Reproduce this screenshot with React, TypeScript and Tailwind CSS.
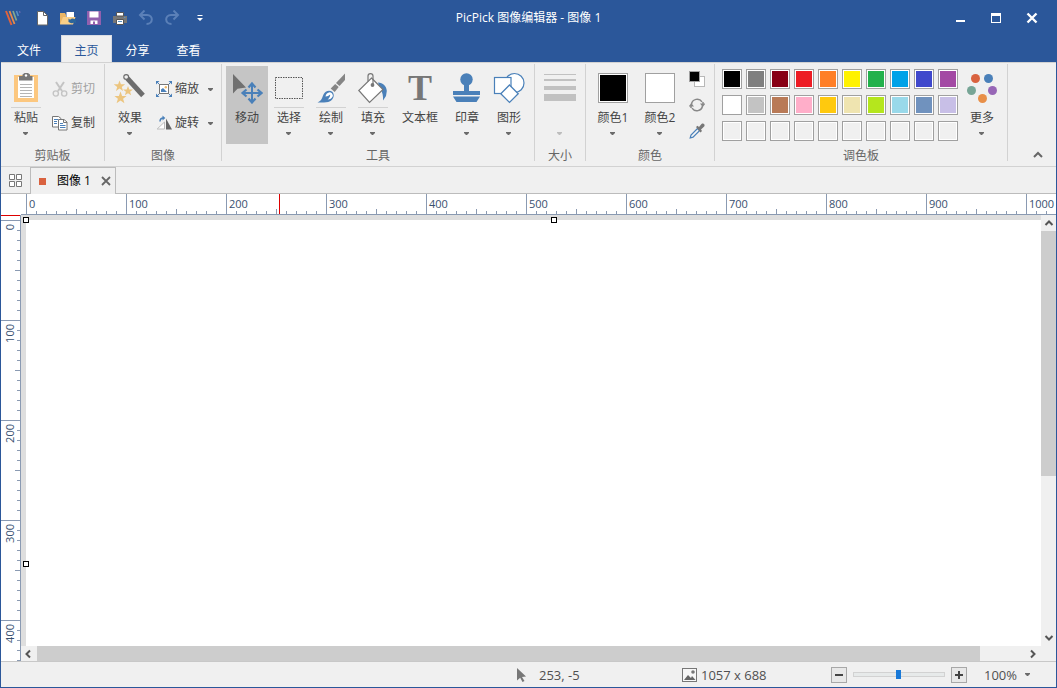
import type { ReactNode } from 'react';

const GRAY = '#777777';
const BLUE = '#4a80b9';

function Caret({ faded = false }: { faded?: boolean }) {
  return (
    <svg width="6" height="3" viewBox="0 0 6 3" className={faded ? 'text-[#bdbdbd]' : 'text-[#6b6b6b]'} aria-hidden="true">
      <path d="M0 0h5v1L3 3H2L0 1z" fill="currentColor" />
    </svg>
  );
}

function Icon({ size = 32, children }: { size?: number; children: ReactNode }) {
  return (
    <svg width={size} height={size} viewBox={`0 0 ${size} ${size}`} fill="none" className="shrink-0" aria-hidden="true">
      {children}
    </svg>
  );
}

/* ---------- Large ribbon icons ---------- */

const PasteIcon = () => (
  <Icon>
    <path d="M4 3h24v27H4z" fill="#fcc77f" />
    <path d="M8 5h16v21H8z" fill="#fff" />
    <path d="M9 4h3.500V2.500L14.500 1h3.500L20 2.500V4h2.500v4.500H9z" fill={GRAY} />
    <circle cx="16" cy="3.500" r="1.200" fill="#fff" />
    <path d="M10 12.500h12M10 15.500h12M10 18.500h12M10 21.500h12M10 24.500h12" stroke="#b5b5b5" />
  </Icon>
);

const EffectsIcon = () => (
  <Icon>
    <path d="M13.500 6.500l15.500 17" stroke="#6d6d6d" strokeWidth="5" />
    <circle cx="12.200" cy="5" r="2.400" fill="#f0f0f0" stroke="#6d6d6d" strokeWidth="1.200" />
    <g fill="#ecc57f">
      <path d="M5.500 8.500l1.400 3.700 4.200.1-3.300 2.600 1.200 4-3.500-2.300-3.500 2.300 1.200-4L-.1 12.300l4.200-.1z" />
      <path d="M14 14l1.300 3.400 3.600.1-2.800 2.200 1 3.500-3.100-2-3.100 2 1-3.500-2.800-2.200 3.600-.1z" />
      <path d="M6.500 19.500l1.600 4.400 4.500.1-3.500 2.800 1.300 4.400-3.900-2.600-3.900 2.600 1.300-4.400L.4 24l4.500-.1z" />
    </g>
  </Icon>
);

const MoveIcon = () => (
  <Icon>
    <path d="M2 2l13 13.500-8.500 1.200L2 21.500z" fill="#707070" />
    <path d="M21 13v16M13 21h16" stroke={BLUE} strokeWidth="2" />
    <path d="M17.500 15.500L21 11.500l3.500 4M17.500 26.500l3.500 4 3.500-4M15.500 17.500L11.500 21l4 3.500M26.500 17.500l4 3.500-4 3.500" stroke={BLUE} strokeWidth="2.200" />
  </Icon>
);

const SelectIcon = () => (
  <Icon>
    <rect x="2.500" y="5.500" width="27" height="21" stroke="#555" strokeDasharray="1.500 1" />
  </Icon>
);

const BrushIcon = () => (
  <Icon>
    <path d="M30 1.500V8l-5.500 6-3.500-3z" fill="#858585" />
    <path d="M20.200 12l3.500 3-4 5-4-3.500z" fill="#858585" />
    <path d="M2.500 30.500c4-1.500 4.500-4.500 6-8 1.500-3.500 6-5 9-2.500 2.500 3 1 7.500-2.500 9.300-3 1.500-8 1.400-12.500 1.200z" fill={BLUE} />
    <path d="M10.500 24.500c.4-2.400 2-4 4.400-4.200 1.800.4 3 1.800 3 3.700-1 2.300-3 3.600-5.300 3.600 1.700-1.400 2.600-3 2.600-5-1.600 1.300-3 2-4.700 1.900z" fill="#fff" />
  </Icon>
);

const FillIcon = () => (
  <Icon>
    <path d="M21 10.500c5 .3 8.500 3.500 8.800 8.500l-.8 5-3 4.500c.3-4.500-.3-8.500-3-12z" fill={BLUE} />
    <path d="M14.500 6L26 17.500 12.500 30.500 1.800 18.500z" fill="#fff" stroke={GRAY} strokeWidth="1.200" />
    <path d="M11 9.500V4c0-3.300 5-3.300 5 0v9" stroke={GRAY} strokeWidth="1.200" />
    <circle cx="15.500" cy="13" r="1.900" fill={GRAY} />
  </Icon>
);

const StampIcon = () => (
  <Icon>
    <circle cx="15.500" cy="7.500" r="6.200" fill={BLUE} />
    <path d="M13 12h5v7h-5zM2 19h27v4H2zM2 24.500h27L25.500 30h-20z" fill={BLUE} />
  </Icon>
);

const ShapesIcon = () => (
  <Icon>
    <circle cx="21.500" cy="11" r="9.500" fill="#fff" stroke={BLUE} strokeWidth="1.200" />
    <rect x="1.500" y="5.500" width="16.500" height="16" fill="#fff" stroke={BLUE} strokeWidth="1.200" />
    <path d="M16.500 13l8.700 8.700-8.700 8.700-8.700-8.700z" fill="#fff" stroke={BLUE} strokeWidth="1.300" />
  </Icon>
);

const LinesIcon = () => (
  <Icon>
    <path d="M0 2h32v1H0zM0 7h32v2H0zM0 14h32v4H0zM0 22h32v7H0z" fill="#c1c1c1" />
  </Icon>
);

const MoreIcon = () => (
  <Icon>
    <circle cx="9.500" cy="6.500" r="4.500" fill="#d9623f" />
    <circle cx="22.500" cy="6.500" r="4.500" fill="#4a80b9" />
    <circle cx="5.500" cy="18.500" r="4.500" fill="#77a596" />
    <circle cx="26.500" cy="18.500" r="4.500" fill="#9766b6" />
    <circle cx="16.500" cy="26.500" r="4.500" fill="#e88f48" />
  </Icon>
);

/* ---------- Small ribbon icons ---------- */

const CutIcon = () => (
  <Icon size={16}>
    <path d="M4 1l6 9M12 1L6 10" stroke="#c4c4c4" strokeWidth="2" />
    <circle cx="3.800" cy="12.500" r="2.600" stroke="#c4c4c4" strokeWidth="1.400" />
    <circle cx="12.200" cy="12.500" r="2.600" stroke="#c4c4c4" strokeWidth="1.400" />
  </Icon>
);

const CopyIcon = () => (
  <Icon size={16}>
    <path d="M.5 1.500h6l2.500 2V12H.5z" fill="#fff" stroke={GRAY} />
    <path d="M2 4.500h4M2 6.500h3M2 8.500h3" stroke={BLUE} />
    <path d="M6.500 4.500h5.500l3 2.500v8H6.500z" fill="#fff" stroke={GRAY} />
    <path d="M11.500 4.500V7.500H15" stroke={GRAY} />
    <path d="M8 8.500h3M8 10.500h5.500M8 12.500h5.500" stroke={BLUE} />
  </Icon>
);

const ScaleIcon = () => (
  <Icon size={16}>
    <rect x="3.500" y="3.500" width="9" height="9" fill="#fff" stroke={GRAY} />
    <path d="M5 11V8.500L7 7l4 4z" fill={BLUE} />
    <circle cx="9.800" cy="6.300" r="1.200" fill="#eeb765" />
    <path d="M0 3.500V0h3.500zM12.500 0H16v3.500zM16 12.500V16h-3.500zM3.500 16H0v-3.500z" fill={BLUE} />
    <path d="M1 1l2 2M15 1l-2 2M15 15l-2-2M1 15l2-2" stroke={BLUE} />
  </Icon>
);

const RotateIcon = () => (
  <Icon size={16}>
    <path d="M8.500 7v7H1.200z" stroke="#bcbcbc" fill="#fff" />
    <path d="M10 3.500l6 11h-6z" fill="#666" />
    <path d="M4 6.500c0-2.600 1.300-3.600 3.500-3.600" stroke={BLUE} strokeWidth="1.500" />
    <path d="M6.500.500L9.300 3 6.500 5.500z" fill={BLUE} />
  </Icon>
);

const SwapIcon = () => (
  <Icon size={16}>
    <path d="M2.500 7A5.800 5.800 0 0 1 13 4.800M13.500 9A5.800 5.800 0 0 1 3 11.200" stroke="#888" strokeWidth="1.500" />
    <path d="M14 5v2M2 11V9" stroke="#888" strokeWidth="1.500" />
    <path d="M11 6.500h5.500L13.700 10zM-.5 9.500H5L2.300 6z" fill="#888" />
  </Icon>
);

const DropperIcon = () => (
  <Icon size={16}>
    <path d="M8.500 5.500L2 12l-.8 3L4 14.200l6.500-6.500z" fill="#f5f5f5" stroke={BLUE} strokeWidth="1.200" />
    <path d="M7 4l1.500-1.200L10 4l2.500-3c2-1.600 4 .8 2.700 2.500L12 6.500l1 1.500L11.500 9.500z" fill={GRAY} />
  </Icon>
);

const MiniColorsIcon = () => (
  <Icon size={16}>
    <rect x="5.500" y="5.500" width="10" height="10" fill="#fff" stroke="#b8b8b8" />
    <rect x=".5" y=".5" width="10" height="10" fill="#000" stroke="#a0a0a0" />
  </Icon>
);

/* ---------- Ribbon parts ---------- */

type BigProps = { label: string; icon: ReactNode; split?: boolean; caret?: boolean; active?: boolean; faded?: boolean; width?: string };

function BigButton({ label, icon, split = false, caret = true, active = false, faded = false, width = 'w-[42px]' }: BigProps) {
  return (
    <button type="button" aria-label={label || '线条大小'} aria-pressed={active} className={`flex h-[78px] shrink-0 flex-col items-center pt-1.5 ${width} ${active ? 'bg-[#c5c5c5]' : ''}`}>
      <span className="flex h-8 w-8 items-center justify-center">{icon}</span>
      <span className={`mt-[3px] h-px w-[30px] ${split ? 'bg-[#d2d2d2]' : ''}`} />
      <span className="h-5 whitespace-nowrap leading-5">{label}</span>
      {caret && <span className="mt-1"><Caret faded={faded} /></span>}
    </button>
  );
}

function SmallButton({ label, icon, caret = false, disabled = false }: { label: string; icon: ReactNode; caret?: boolean; disabled?: boolean }) {
  return (
    <button type="button" disabled={disabled} className={`flex h-[34px] items-center pl-[5px] ${caret ? 'pr-[3px]' : 'pr-[5px]'} ${disabled ? 'text-[#a0a0a0]' : ''}`}>
      {icon}
      <span className="ml-[3px] whitespace-nowrap">{label}</span>
      {caret && <span className="ml-[9px]"><Caret /></span>}
    </button>
  );
}

function Group({ label, children }: { label: string; children: ReactNode }) {
  return (
    <>
      <section aria-label={label} className="flex shrink-0 flex-col px-1 pt-[3px]">
        <div className="flex h-[78px]">{children}</div>
        <div className="mt-0.5 text-center leading-5 text-[#666]">{label}</div>
      </section>
      <div className="mb-[5px] mt-px w-px shrink-0 bg-[#d2d2d2]" />
    </>
  );
}

function ColorBox({ color }: { color: string }) {
  return (
    <span className="h-[30px] w-[30px] border border-[#a0a0a0] bg-white p-px">
      <span className={`block h-full w-full ${color}`} />
    </span>
  );
}

const PALETTE = [
  'bg-black', 'bg-[#7f7f7f]', 'bg-[#880015]', 'bg-[#ed1c24]', 'bg-[#ff7f27]',
  'bg-[#fff200]', 'bg-[#22b14c]', 'bg-[#00a2e8]', 'bg-[#3f48cc]', 'bg-[#a349a4]',
  'bg-white', 'bg-[#c3c3c3]', 'bg-[#b97a57]', 'bg-[#ffaec9]', 'bg-[#ffc90e]',
  'bg-[#efe4b0]', 'bg-[#b5e61d]', 'bg-[#99d9ea]', 'bg-[#7092be]', 'bg-[#c8bfe7]',
  ...Array<string>(10).fill('bg-[#f0f0f0]'),
];

function Ribbon() {
  return (
    <div className="flex h-[105px] shrink-0 border-b border-t border-[#d2d2d2] bg-[#f0f0f0] text-[#444]">
      <Group label="剪贴板">
        <BigButton label="粘贴" icon={<PasteIcon />} split />
        <div className="flex flex-col pt-1.5">
          <SmallButton label="剪切" icon={<CutIcon />} disabled />
          <SmallButton label="复制" icon={<CopyIcon />} />
        </div>
      </Group>
      <Group label="图像">
        <BigButton label="效果" icon={<EffectsIcon />} />
        <div className="flex flex-col pt-1.5">
          <SmallButton label="缩放" icon={<ScaleIcon />} caret />
          <SmallButton label="旋转" icon={<RotateIcon />} caret />
        </div>
      </Group>
      <Group label="工具">
        <BigButton label="移动" icon={<MoveIcon />} caret={false} active />
        <BigButton label="选择" icon={<SelectIcon />} split />
        <BigButton label="绘制" icon={<BrushIcon />} split />
        <BigButton label="填充" icon={<FillIcon />} split />
        <BigButton
          label="文本框"
          width="w-[52px]"
          caret={false}
          icon={<span className="font-['Liberation_Serif',serif] text-[36px] font-bold leading-8 text-[#777]">T</span>}
        />
        <BigButton label="印章" icon={<StampIcon />} />
        <BigButton label="图形" icon={<ShapesIcon />} />
      </Group>
      <Group label="大小">
        <BigButton label="" icon={<LinesIcon />} faded />
      </Group>
      <Group label="颜色">
        <BigButton label="颜色1" icon={<ColorBox color="bg-black" />} width="w-[46px]" />
        <BigButton label="颜色2" icon={<ColorBox color="bg-white" />} width="w-12" />
        <div className="grid w-[26px] grid-rows-3 place-items-center">
          <button type="button" aria-label="默认颜色"><MiniColorsIcon /></button>
          <button type="button" aria-label="交换颜色"><SwapIcon /></button>
          <button type="button" aria-label="拾色器"><DropperIcon /></button>
        </div>
      </Group>
      <Group label="调色板">
        <div className="mr-[3px] grid grid-cols-10 content-start gap-x-1 gap-y-1.5 pl-[3px] pt-[3px]">
          {PALETTE.map((color, i) => (
            <button key={i} type="button" aria-label={`颜色 ${i + 1}`} className="h-5 w-5 border border-[#a0a0a0] bg-white p-px">
              <span className={`block h-full w-full ${color}`} />
            </button>
          ))}
        </div>
        <BigButton label="更多" icon={<MoreIcon />} />
      </Group>
      <button type="button" aria-label="折叠功能区" className="mb-1.5 ml-auto mr-3 self-end p-px">
        <svg width="10" height="8" viewBox="0 0 10 8" fill="none" aria-hidden="true">
          <path d="M1 6l4-4 4 4" stroke="#666" strokeWidth="2" />
        </svg>
      </button>
    </div>
  );
}

/* ---------- Title bar and ribbon tabs ---------- */

function QuickButton({ label, children }: { label: string; children: ReactNode }) {
  return (
    <button type="button" aria-label={label} className="flex h-6 w-[26px] items-center justify-center">
      <Icon size={16}>{children}</Icon>
    </button>
  );
}

function TitleBar() {
  return (
    <header className="grid h-[35px] shrink-0 grid-cols-[1fr_auto_1fr] items-center text-white">
      <div className="flex items-center">
        <svg width="16" height="16" viewBox="0 0 16 16" className="ml-1 mr-2" fill="none" aria-hidden="true">
          <path d="M1 1l5.500 14" stroke="#e2633c" strokeWidth="2" />
          <path d="M4.500 1l5 13" stroke="#e98a49" strokeWidth="1.800" />
          <path d="M8 1l3.500 9.500" stroke="#86a88b" strokeWidth="1.700" />
          <path d="M11.500 1l1.800 5" stroke="#5a93c4" strokeWidth="1.500" />
          <path d="M14.500 1l.5 2" stroke="#6f6bb0" strokeWidth="1.200" />
        </svg>
        <QuickButton label="新建">
          <path d="M3.500 1.500h6l4 4v9.500h-10z" fill="#fff" stroke="#666" />
          <path d="M9.500 1.500v4h4" stroke="#666" />
        </QuickButton>
        <QuickButton label="打开">
          <path d="M0 3h5l1 2v9H0z" fill="#e9b565" />
          <path d="M6.500 2H14v7H6.500z" fill="#fff" />
          <path d="M0 14.500L3 7h12.500L13 14.500z" fill="#f9cf88" />
          <path d="M8.500 12V8.500L10 9.800c2-2 4.500-1.500 6 .7v3l-1.500-1.200c-1.500 1.300-2.700 1.300-4 .6z" fill="#2b659b" />
        </QuickButton>
        <QuickButton label="保存">
          <path d="M1 1h14v14H1z" fill="#9260ae" />
          <path d="M3.500 1.500h9v6h-9zM4.500 10.500h7V14h-7z" fill="#fff" />
          <path d="M7 11.500h2V14H7z" fill="#9260ae" />
        </QuickButton>
        <QuickButton label="打印">
          <path d="M1 6h14v7H1z" fill="#777" />
          <path d="M4.500 2.500h7V6h-7zM4.500 9.500h7v5h-7z" fill="#fff" stroke="#555" />
          <path d="M6 11.500h4M12 7.500h1.500" stroke="#5a93c4" />
        </QuickButton>
        <QuickButton label="撤消">
          <path d="M6.500.500L2 5l4.500 4.500M2.500 5H9c6.500 0 6.500 9-.5 9" stroke="#5b80b8" strokeWidth="2" />
        </QuickButton>
        <QuickButton label="恢复">
          <path d="M9.500.500L14 5 9.500 9.500M13.500 5H7c-6.500 0-6.500 9 .5 9" stroke="#5b80b8" strokeWidth="2" />
        </QuickButton>
        <button type="button" aria-label="自定义快速访问工具栏" className="ml-0.5 flex h-6 w-[26px] items-center justify-center">
          <svg width="6" height="6" viewBox="0 0 6 6" aria-hidden="true">
            <path d="M.5 0h5v1h-5zM0 3h6L3 6z" fill="#fff" />
          </svg>
        </button>
      </div>
      <h1 className="whitespace-nowrap">PicPick 图像编辑器 - 图像 1</h1>
      <div className="flex justify-end pr-1.5">
        <button type="button" aria-label="最小化" className="flex h-6 w-9 items-center justify-center">
          <Icon size={12}><path d="M2 8h9v2H2z" fill="#fff" /></Icon>
        </button>
        <button type="button" aria-label="最大化" className="flex h-6 w-9 items-center justify-center">
          <Icon size={12}><path d="M1 1h10v10H1zM2 4v6h8V4z" fill="#fff" fillRule="evenodd" /></Icon>
        </button>
        <button type="button" aria-label="关闭" className="flex h-6 w-9 items-center justify-center">
          <Icon size={12}><path d="M1.500 1.500l9 9M10.500 1.500l-9 9" stroke="#fff" strokeWidth="2.400" /></Icon>
        </button>
      </div>
    </header>
  );
}

function RibbonTabs() {
  return (
    <nav className="flex h-[27px] shrink-0 text-white">
      <button type="button" className="mr-1 w-14 pt-1">文件</button>
      <button type="button" aria-current="page" className="-mb-px w-[51px] border-x border-t border-[#d9dde4] bg-[#f0f0f0] pt-0.5 text-[#2b579a]">主页</button>
      <button type="button" className="w-[51px] pt-1">分享</button>
      <button type="button" className="w-[51px] pt-1">查看</button>
    </nav>
  );
}

function DocumentTabs() {
  return (
    <div className="flex h-[27px] shrink-0 border-b border-[#bcbcbc] bg-[#f0f0f0] text-black">
      <button type="button" aria-label="所有图像" className="flex w-[29px] items-center justify-center">
        <Icon size={13}>
          <path d="M.5.500h5v5h-5zM7.500.500h5v5h-5zM.5 7.500h5v5h-5zM7.500 7.500h5v5h-5z" fill="#fff" stroke="#777" />
        </Icon>
      </button>
      <div className="-mb-px flex items-center border-x border-t border-[#bcbcbc] bg-[#f0f0f0] pl-2 pr-1">
        <span className="h-[7px] w-[7px] bg-[#d9623f]" />
        <button type="button" className="ml-[11px] whitespace-nowrap">图像 1</button>
        <button type="button" aria-label="关闭图像 1" className="ml-2.5">
          <Icon size={10}><path d="M1 1l8 8M9 1L1 9" stroke="#666" strokeWidth="1.800" /></Icon>
        </button>
      </div>
    </div>
  );
}

/* ---------- Rulers ---------- */

const TICKS = [1, 2, 3, 4, 5, 6, 7, 8, 9];

function HorizontalRuler() {
  return (
    <div className="relative flex min-w-0 flex-1 overflow-hidden border-b border-[#8a9ab2] bg-white pl-[5px]">
      {Array.from({ length: 11 }, (_, i) => (
        <div key={i} className="relative flex w-[100px] shrink-0 items-end border-l border-[#8a9ab2]">
          <span className="absolute left-0.5 top-0.5 leading-4">{i * 100}</span>
          <div className="flex items-end gap-[9px] pl-[9px]">
            {TICKS.map((t) => (
              <span key={t} className={`w-px bg-[#8a9ab2] ${t === 5 ? 'h-[5px]' : 'h-[3px]'}`} />
            ))}
          </div>
        </div>
      ))}
      <span className="absolute inset-y-0 left-[258px] w-px bg-[#dd0000]" />
    </div>
  );
}

function VerticalRuler() {
  return (
    <div className="relative flex w-5 shrink-0 flex-col overflow-hidden border-r border-[#8a9ab2] bg-white pt-[5px]">
      {Array.from({ length: 5 }, (_, i) => (
        <div key={i} className="relative flex h-[100px] shrink-0 flex-col items-end border-t border-[#8a9ab2]">
          <span className="absolute left-px top-[3px] rotate-180 leading-4 [writing-mode:vertical-rl]">{i * 100}</span>
          <div className="flex flex-col items-end gap-[9px] pt-[9px]">
            {TICKS.map((t) => (
              <span key={t} className={`h-px bg-[#8a9ab2] ${t === 5 ? 'w-[5px]' : 'w-[3px]'}`} />
            ))}
          </div>
        </div>
      ))}
      <span className="absolute inset-x-0 top-0 h-px bg-[#dd0000]" />
    </div>
  );
}

/* ---------- Workspace ---------- */

function ScrollArrow({ label, d, box }: { label: string; d: string; box: string }) {
  return (
    <button type="button" aria-label={label} className={`flex shrink-0 items-center justify-center ${box}`}>
      <Icon size={10}><path d={d} stroke="#555" strokeWidth="2" /></Icon>
    </button>
  );
}

const HANDLE = 'absolute h-1.5 w-1.5 border border-black bg-white';

function Workspace() {
  return (
    <main className="flex min-h-0 flex-1 flex-col text-[11px] text-[#39506f]">
      <div className="flex h-[21px] shrink-0">
        <div className="w-5 shrink-0 bg-white" />
        <HorizontalRuler />
      </div>
      <div className="flex min-h-0 flex-1">
        <VerticalRuler />
        <div className="flex min-w-0 flex-1 flex-col">
          <div className="flex min-h-0 flex-1">
            <div className="relative min-w-0 flex-1 bg-[#dedede] pl-[5px] pt-[5px]">
              <div className="h-full bg-white" />
              <span className={`${HANDLE} left-0.5 top-0.5`} />
              <span className={`${HANDLE} left-[530px] top-0.5`} />
              <span className={`${HANDLE} left-0.5 top-[346px]`} />
            </div>
            <div className="flex w-[15px] shrink-0 flex-col bg-[#f0f0f0]">
              <ScrollArrow label="向上滚动" d="M1.500 7L5 3.500 8.500 7" box="h-4" />
              <div className="grow-[245] bg-[#cdcdcd]" />
              <div className="grow-[154]" />
              <ScrollArrow label="向下滚动" d="M1.500 3L5 6.500 8.500 3" box="h-4" />
            </div>
          </div>
          <div className="flex h-[15px] shrink-0 bg-[#f0f0f0] pr-4">
            <ScrollArrow label="向左滚动" d="M6 1.500L2.500 5 6 8.500" box="w-4" />
            <div className="grow-[943] bg-[#cdcdcd]" />
            <div className="grow-[44]" />
            <ScrollArrow label="向右滚动" d="M4 1.500L7.500 5 4 8.500" box="w-4" />
          </div>
        </div>
      </div>
    </main>
  );
}

function StatusBar() {
  return (
    <footer className="flex h-[26px] shrink-0 items-center justify-end border-t border-[#c8c8c8] bg-[#f0f0f0] text-[13px] text-[#505050]">
      <div className="flex w-[165px] items-center">
        <svg width="10" height="14" viewBox="0 0 10 14" aria-hidden="true">
          <path d="M0 0l9 8.500-4 .4L7.500 13l-2 1-2.300-4.200L0 12.500z" fill="#777" />
        </svg>
        <span className="ml-3">253, -5</span>
      </div>
      <div className="flex w-[149px] items-center">
        <Icon size={16}>
          <rect x=".5" y="1.500" width="14" height="13" fill="#f7f7f7" stroke="#777" />
          <path d="M2 13l4-5 3 3 1-2 3.500 4z" fill="#666" />
          <circle cx="11" cy="5" r="1.800" fill="#777" />
        </Icon>
        <span className="ml-[3px] whitespace-nowrap">1057 x 688</span>
      </div>
      <button type="button" aria-label="缩小" className="flex h-4 w-4 items-center justify-center border border-[#a8a8a8] bg-[#e8e8e8]">
        <Icon size={8}><path d="M0 3h8v2H0z" fill="#444" /></Icon>
      </button>
      <input
        type="range"
        aria-label="缩放比例"
        min={0}
        max={100}
        defaultValue={50}
        className="mx-1.5 h-[5px] w-[92px] appearance-none border border-[#d2d2d2] bg-[#e7eaea] [&::-webkit-slider-thumb]:h-[9px] [&::-webkit-slider-thumb]:w-[5px] [&::-webkit-slider-thumb]:appearance-none [&::-webkit-slider-thumb]:bg-[#1979d8]"
      />
      <button type="button" aria-label="放大" className="flex h-4 w-4 items-center justify-center border border-[#a8a8a8] bg-[#e8e8e8]">
        <Icon size={8}><path d="M0 3h3V0h2v3h3v2H5v3H3V5H0z" fill="#444" /></Icon>
      </button>
      <button type="button" className="ml-[17px] mr-[25px] flex items-center gap-2">
        100%
        <Caret />
      </button>
    </footer>
  );
}

export default function App() {
  return (
    <div className="flex h-screen flex-col overflow-hidden border-x border-b border-[#2b579a] bg-[#2b579a] font-['Open_Sans','Noto_Sans_CJK_SC',sans-serif] text-[12px] leading-4">
      <TitleBar />
      <RibbonTabs />
      <Ribbon />
      <DocumentTabs />
      <Workspace />
      <StatusBar />
    </div>
  );
}
